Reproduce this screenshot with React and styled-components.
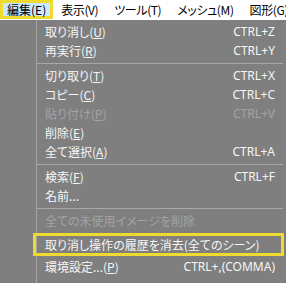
import React from "react";
import styled, { createGlobalStyle } from "styled-components";

const GlobalStyle = createGlobalStyle`
  html, body {
    margin: 0;
    padding: 0;
    background: #ffffff;
    overflow: hidden;
  }
  body {
    font-family: "Noto Sans CJK JP", "Noto Sans", sans-serif;
  }
`;

const menus = [
  { label: "編集", key: "E", active: true },
  { label: "表示", key: "V" },
  { label: "ツール", key: "T" },
  { label: "メッシュ", key: "M" },
  { label: "図形", key: "G" },
];

const items = [
  { label: "取り消し", key: "U", shortcut: "CTRL+Z" },
  { label: "再実行", key: "R", shortcut: "CTRL+Y" },
  { sep: true },
  { label: "切り取り", key: "T", shortcut: "CTRL+X" },
  { label: "コピー", key: "C", shortcut: "CTRL+C" },
  { label: "貼り付け", key: "P", shortcut: "CTRL+V", disabled: true },
  { label: "削除", key: "E" },
  { label: "全て選択", key: "A", shortcut: "CTRL+A" },
  { sep: true },
  { label: "検索", key: "F", shortcut: "CTRL+F" },
  { label: "名前..." },
  { sep: true },
  { label: "全ての未使用イメージを削除", disabled: true },
  { label: "取り消し操作の履歴を消去(全てのシーン)", marked: true },
  { label: "環境設定...", key: "P", shortcut: "CTRL+,(COMMA)" },
];

const Page = styled.div`
  width: 286px;
  height: 283px;
  display: flex;
  flex-direction: column;
  overflow: hidden;
`;

const MenuBar = styled.div`
  display: flex;
  height: 20px;
  background: #ffffff;
  flex-shrink: 0;
  overflow: hidden;
`;

const MenuTitle = styled.div`
  display: flex;
  align-items: center;
  box-sizing: border-box;
  flex-shrink: 0;
  height: 19px;
  padding: 0 ${(p) => (p.$active ? "4px" : "8px")};
  font-size: 12px;
  letter-spacing: ${(p) => (p.$active ? "0" : "-0.4px")};
  font-feature-settings: "palt";
  color: #000;
  white-space: nowrap;
  background: ${(p) => (p.$active ? "#cce8ff" : "transparent")};
  border: ${(p) => (p.$active ? "3px solid #efdb2f" : "none")};
`;

const Dropdown = styled.div`
  flex: 1;
  display: flex;
  background: #7f7f7f;
`;

const Gutter = styled.div`
  width: 36px;
  flex-shrink: 0;
`;

const List = styled.div`
  flex: 1;
  border-left: 1px solid #a4a4a4;
  padding-top: 2px;
  display: flex;
  flex-direction: column;
`;

const Row = styled.div`
  display: flex;
  align-items: center;
  justify-content: space-between;
  height: 19px;
  padding: 0 11px 0 8px;
  font-size: 12px;
  font-feature-settings: "palt";
  color: ${(p) => (p.$disabled ? "#a3a3a3" : "#f6f6f6")};
  white-space: nowrap;
`;

const MarkedRow = styled(Row)`
  box-sizing: border-box;
  height: 23px;
  margin: 3px 2px 1px -4px;
  padding-left: 9px;
  border: 3px solid #efdb2f;
`;

const Shortcut = styled.span`
  font-family: "Noto Sans", sans-serif;
  font-size: 12px;
`;

const Separator = styled.div`
  height: 1px;
  margin: 3px 3px 2px 0;
  background: #a8a8a8;
`;

const Label = ({ label, access }) => (
  <span>
    {label}
    {access && (
      <>
        (<u>{access}</u>)
      </>
    )}
  </span>
);

export default function App() {
  return (
    <Page>
      <GlobalStyle />
      <MenuBar>
        {menus.map((m) => (
          <MenuTitle key={m.label} $active={m.active}>
            {m.label}({m.key})
          </MenuTitle>
        ))}
      </MenuBar>
      <Dropdown>
        <Gutter />
        <List>
          {items.map((it, i) => {
            if (it.sep) return <Separator key={i} />;
            const R = it.marked ? MarkedRow : Row;
            return (
              <R key={i} $disabled={it.disabled}>
                <Label label={it.label} access={it.key} />
                {it.shortcut && <Shortcut>{it.shortcut}</Shortcut>}
              </R>
            );
          })}
        </List>
      </Dropdown>
    </Page>
  );
}
